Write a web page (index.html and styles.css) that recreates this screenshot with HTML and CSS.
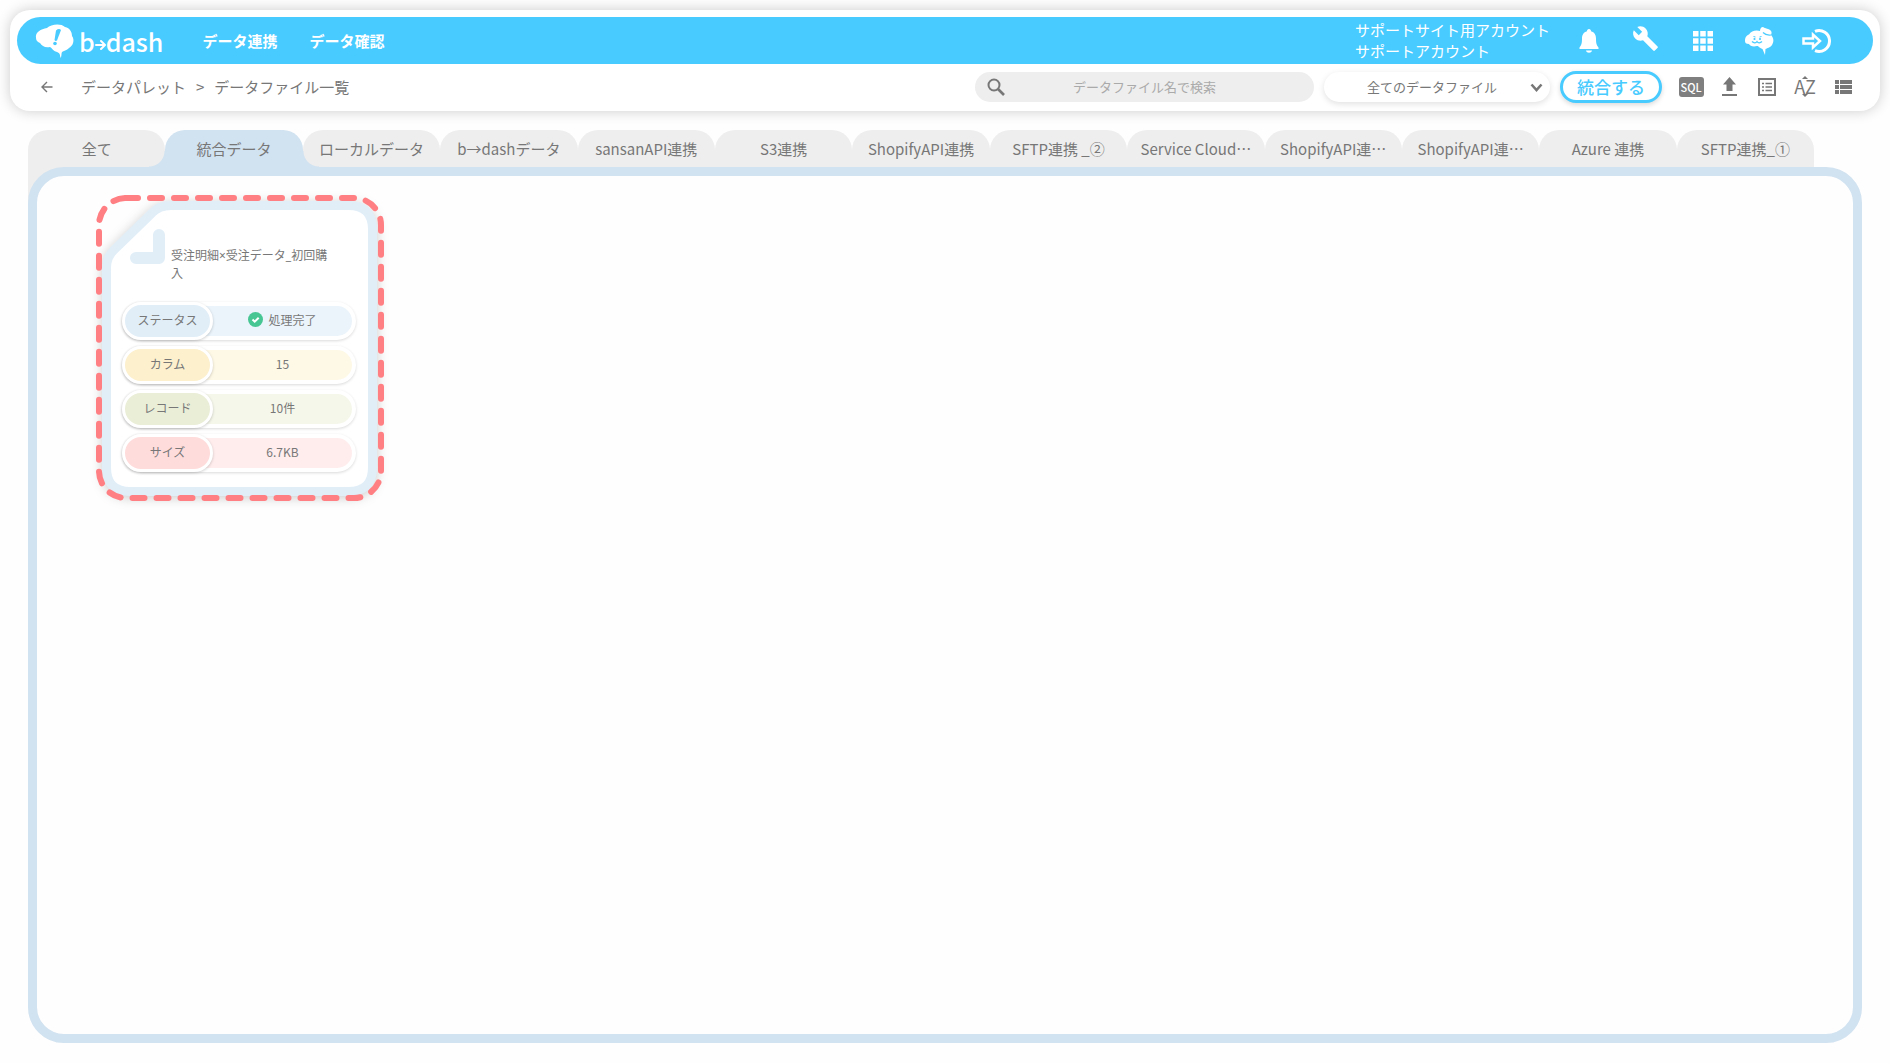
FILE: index.html
```html
<!doctype html>
<html lang="ja">
<head>
	<meta charset="utf-8">
	<title>データファイル一覧</title>
	<link rel="stylesheet" href="styles.css">
</head>
<body>
	<header class="header">
		<div class="bar">
			<a href="#" class="logo">
				<svg width="40" height="36" viewBox="0 0 40 36">
					<path fill="#fff" d="M1 15C0 9 6 6 12 5C16 1 26 0 30 4C35 5 37 9 37 13C40 17 38 23 34 25C31 28 28 28 27 29C26 31 27 33 25.500 35C25 32 25 30 22 29C18 28 17 25 15 24C10 25 7 23 5 20C3 19 1 18 1 15Z"/>
					<path fill="#48cbff" d="M21 7.500Q24 5 26 7L22 17.500Q20.500 18.500 19.500 17Z"/>
					<circle cx="20" cy="20.500" r="1.800" fill="#48cbff"/>
				</svg>
				<span class="logo-text">b<svg width="11" height="12" viewBox="0 0 11 12"><path d="M1 6H9M6 2L10 6L6 10" fill="none" stroke="#fff" stroke-width="2" stroke-linecap="round" stroke-linejoin="round"/></svg>dash</span>
			</a>
			<nav class="nav">
				<a href="#">データ連携</a>
				<a href="#">データ確認</a>
			</nav>
			<div class="account">
				<p>サポートサイト用アカウント</p>
				<p>サポートアカウント</p>
			</div>
			<div class="bar-icons">
				<button type="button" aria-label="通知">
					<svg width="20" height="24" viewBox="0 0 20 24" fill="#fff"><path d="M10 0C11.300 0 12 1 12 2.200C15.500 3 17 6 17 9.500C17 14 17.500 16 19.500 18.500V20H.5V18.500C2.500 16 3 14 3 9.500C3 6 4.500 3 8 2.200C8 1 8.700 0 10 0Z"/><path d="M7 21.500H13C12.500 24.500 7.500 24.500 7 21.500Z"/></svg>
				</button>
				<button type="button" class="raised" aria-label="設定">
					<svg width="27" height="27" viewBox="0 0 24 24" fill="#fff"><path d="M22.700 19l-9.100-9.100c.9-2.300.4-5-1.500-6.900-2-2-5-2.400-7.400-1.300L9 6 6 9 1.600 4.700C.4 7.100.9 10.100 2.900 12.100c1.900 1.900 4.600 2.400 6.900 1.500l9.100 9.100c.4.4 1 .4 1.400 0l2.300-2.300c.5-.4.5-1.100.1-1.400z"/></svg>
				</button>
				<button type="button" aria-label="アプリ一覧">
					<svg width="20" height="20" viewBox="0 0 20 20" fill="#fff"><path d="M0 0h5.500v5.500H0zM7.250 0h5.500v5.500h-5.500zM14.500 0H20v5.500h-5.500zM0 7.250h5.500v5.500H0zM7.250 7.250h5.500v5.500h-5.500zM14.500 7.250H20v5.500h-5.500zM0 14.500h5.500V20H0zM7.250 14.500h5.500V20h-5.500zM14.500 14.500H20V20h-5.500z"/></svg>
				</button>
				<button type="button" aria-label="ヘルプ">
					<svg width="29" height="28" viewBox="0 0 29 28"><path fill="#fff" d="M0 14C0 10 2 8 4 7.500C6 4 11 2.500 15 4C15 2 16 0 18 0C20 2 24 1 26 4C27 5 26.500 7 26 8C29 11 29 15 27 18C25 21 22 21 20.500 22L20 28L17.500 22C14 21 14 19 12 19C8 20 5 19 4 17C1 17 0 16 0 14Z"/><path d="M18 5.500C20 7.500 23 8.500 26 8M7 14.500C9 16.500 11 16 12 14.500C13 16 15 16.500 17 14.500" fill="none" stroke="#48cbff" stroke-width="1.200"/><path d="M8.500 9.500L10.500 10M16.500 9.500L14.500 10" stroke="#48cbff"/><circle cx="9.500" cy="12" r="1.100" fill="#48cbff"/><circle cx="15" cy="12" r="1.100" fill="#48cbff"/></svg>
				</button>
				<button type="button" aria-label="ログアウト">
					<svg width="29" height="26" viewBox="0 0 29 26" fill="none" stroke="#fff"><path stroke-width="2.500" d="M1.500 10.500H11V6.500L18 13L11 19.500V15.500H1.500Z"/><path stroke-width="3" d="M13 3.300A10.500 10.500 0 1 1 13 22.700"/></svg>
				</button>
			</div>
		</div>
		<div class="tools">
			<a href="#" class="back" aria-label="戻る">
				<svg width="12" height="12" viewBox="0 0 12 12"><path d="M11.500 6H1M6 1L1 6L6 11" fill="none" stroke="#777" stroke-width="1.400"/></svg>
			</a>
			<nav class="breadcrumb">
				<a href="#">データパレット</a>
				<span>&gt;</span>
				<span>データファイル一覧</span>
			</nav>
			<label class="search">
				<svg width="18" height="18" viewBox="0 0 18 18"><circle cx="7" cy="7" r="5.500" fill="none" stroke="#777" stroke-width="2"/><path d="M11 11L17 17" stroke="#777" stroke-width="2.600"/></svg>
				<input type="text" placeholder="データファイル名で検索" aria-label="データファイル名で検索">
			</label>
			<div class="filter">
				<select aria-label="データファイルの種類">
					<option>全てのデータファイル</option>
				</select>
				<svg width="13" height="9" viewBox="0 0 13 9"><path d="M1.500 1.500L6.500 7L11.500 1.500" fill="none" stroke="#777" stroke-width="2.600"/></svg>
			</div>
			<button type="button" class="merge">統合する</button>
			<div class="tool-icons">
				<button type="button" aria-label="SQL"><span class="sql">SQL</span></button>
				<button type="button" aria-label="アップロード">
					<svg width="17" height="20" viewBox="0 0 17 20" fill="#777"><path d="M8.500 0L15 7.500H11.500V14H5.500V7.500H2ZM1 17H16V19H1Z"/></svg>
				</button>
				<button type="button" aria-label="詳細表示">
					<svg width="18" height="18" viewBox="0 0 18 18" fill="none" stroke="#777"><path stroke-width="2" d="M1 1H17V17H1Z"/><path stroke-width="1.600" d="M4 5.500H6M7.500 5.500H14M4 9H6M7.500 9H14M4 12.500H6M7.500 12.500H14"/></svg>
				</button>
				<button type="button" aria-label="並び替え">
					<span class="sort">
						<svg width="6" height="3" viewBox="0 0 6 3" fill="#777"><path d="M0 3L3 0L6 3Z"/></svg>
						<span>AZ</span>
						<svg width="6" height="3" viewBox="0 0 6 3" fill="#777"><path d="M0 0L3 3L6 0Z"/></svg>
					</span>
				</button>
				<button type="button" aria-label="リスト表示">
					<svg width="17" height="14" viewBox="0 0 17 14" fill="#777"><path d="M0 0h4v4H0zM5 0h12v4H5zM0 5h4v4H0zM5 5h12v4H5zM0 10h4v4H0zM5 10h12v4H5z"/></svg>
				</button>
			</div>
		</div>
	</header>

	<main class="main">
		<nav class="tabs">
			<a href="#">全て</a>
			<a href="#" class="active">統合データ</a>
			<a href="#">ローカルデータ</a>
			<a href="#">b→dashデータ</a>
			<a href="#">sansanAPI連携</a>
			<a href="#">S3連携</a>
			<a href="#">ShopifyAPI連携</a>
			<a href="#">SFTP連携 _②</a>
			<a href="#">Service Cloud…</a>
			<a href="#">ShopifyAPI連…</a>
			<a href="#">ShopifyAPI連…</a>
			<a href="#">Azure 連携</a>
			<a href="#">SFTP連携_①</a>
		</nav>
		<div class="panel-wrap">
			<section class="panel">
				<article class="card">
					<svg class="card-frame" width="300" height="320" viewBox="0 0 300 320">
						<path class="frame" d="M16.500 277.500V78Q16.500 67 24 60L62 23Q69 15.500 81 15.500H258.500Q282.500 15.500 282.500 39.500V277.500Q282.500 301.500 258.500 301.500H40.500Q16.500 301.500 16.500 277.500Z"/>
						<path class="fold" d="M46 68H69V45"/>
						<rect class="dash" x="9" y="8" width="282" height="300" rx="27"/>
					</svg>
					<h2>受注明細×受注データ_初回購入</h2>
					<dl>
						<div class="row blue">
							<dt>ステータス</dt>
							<dd>
								<svg width="15" height="15" viewBox="0 0 15 15"><circle cx="7.500" cy="7.500" r="7.500" fill="#47c694"/><path d="M4.500 7.500L6.700 9.700L10.700 5.700" fill="none" stroke="#fff" stroke-width="2"/></svg>
								処理完了
							</dd>
						</div>
						<div class="row yellow">
							<dt>カラム</dt>
							<dd>15</dd>
						</div>
						<div class="row green">
							<dt>レコード</dt>
							<dd>10件</dd>
						</div>
						<div class="row red">
							<dt>サイズ</dt>
							<dd>6.7KB</dd>
						</div>
					</dl>
				</article>
			</section>
		</div>
	</main>
</body>
</html>
```

FILE: styles.css
```css
*{margin: 0;padding: 0;box-sizing: border-box;}
body{
	min-height: 100vh;display: flex;flex-direction: column;
	padding: 10px 10px 20px;
	background: #fefefe;color: #777;
	font-family: "Noto Sans CJK JP", "Noto Sans", sans-serif;
	font-size: 15px;
}
a{color: inherit;text-decoration: none;}
button{border: 0;background: none;font: inherit;color: inherit;cursor: pointer;}
svg{display: block;flex: none;}

/* header */
.header{
	background: #fff;border-radius: 20px;padding: 7px 7px 8px;
	box-shadow: 0 0 14px rgba(0,0,0,.2);
}
.bar{
	display: flex;align-items: center;height: 47px;
	padding: 0 42px 0 18px;
	background: #48cbff;border-radius: 24px;color: #fff;
}
.logo{display: flex;align-items: center;gap: 4px;}
.logo-text{
	display: flex;align-items: center;
	font-size: 25px;line-height: 34px;font-weight: 500;
}
.logo-text svg{margin-top: 8px;}
.nav{display: flex;gap: 32px;margin-left: 39px;font-weight: 700;}
.account{margin-left: auto;padding-bottom: 2px;line-height: 21px;}
.bar-icons{display: flex;gap: 28px;margin-left: 24px;}
.bar-icons button{width: 29px;height: 32px;display: flex;align-items: center;justify-content: center;}
.bar-icons .raised{align-items: flex-start;}

.tools{display: flex;align-items: center;height: 39px;padding: 6px 17px 0 24px;}
.back{margin-right: 28px;}
.breadcrumb{display: flex;gap: 10px;}
.search{
	display: flex;align-items: center;width: 339px;height: 30px;
	margin-left: auto;padding: 0 12px;
	background: #eee;border-radius: 15px;
}
.search input{
	flex: 1;min-width: 0;border: 0;background: none;outline: 0;
	font: inherit;font-size: 13px;text-align: center;padding-right: 18px;
}
.search input::placeholder{color: #aaa;}
.filter{position: relative;width: 226px;margin-left: 10px;}
.filter select{
	appearance: none;display: block;width: 100%;height: 30px;border: 0;border-radius: 15px;
	padding-right: 10px;background: #fff;box-shadow: 0 2px 6px rgba(0,0,0,.12);
	font: inherit;font-size: 13px;color: #777;text-align: center;text-align-last: center;
}
.filter svg{position: absolute;right: 7px;top: 11px;pointer-events: none;}
.merge{
	width: 102px;height: 32px;margin: 0 16px 0 10px;
	border: 3px solid #48cbff;border-radius: 16px;background: #fff;
	box-shadow: 0 2px 5px rgba(0,0,0,.15);
	color: #48cbff;font-size: 17px;font-weight: 500;line-height: 24px;
}
.tool-icons{display: flex;gap: 12px;}
.tool-icons button{width: 26px;height: 26px;display: flex;align-items: center;justify-content: center;}
.sql{
	width: 25px;height: 20px;border-radius: 3px;background: #7f7f7f;color: #fff;
	font-size: 11px;line-height: 20px;font-weight: 500;
}
.sort{display: flex;flex-direction: column;align-items: center;font-size: 18px;line-height: 15px;}

/* tabs */
.main{flex: 1;display: flex;flex-direction: column;padding: 19px 18px 0;}
.tabs{display: flex;margin-right: 48px;}
.tabs a{
	flex: 1 1 0;min-width: 0;height: 37px;line-height: 37px;
	background: #eee;border-radius: 20px 20px 0 0;
	text-align: center;font-size: 15px;white-space: nowrap;
}
.tabs .active{position: relative;background: #d1e2f0;}
.tabs .active:before,.tabs .active:after{content: '';position: absolute;bottom: 0;width: 16px;height: 16px;}
.tabs .active:before{right: 100%;background: radial-gradient(circle at 0 0, transparent 15px, #d1e2f0 16px);}
.tabs .active:after{left: 100%;background: radial-gradient(circle at 100% 0, transparent 15px, #d1e2f0 16px);}
.panel-wrap{flex: 1;display: flex;background: linear-gradient(#eee, #eee) no-repeat 0 0 / 38px 38px;}
.panel{
	flex: 1;padding: 25px 65px;
	border: 9px solid #d1e2f0;border-radius: 36px;background: #fefefe;
}

/* file card */
.card{position: relative;width: 276px;padding: 46px 22px 20px 20px;}
.card-frame{position: absolute;left: -12px;top: -11px;overflow: visible;}
.card-frame .frame{
	fill: #fff;stroke: #e1eef8;stroke-width: 9;
	filter: drop-shadow(0 2px 6px rgba(0,0,0,.2));
}
.card-frame .fold{fill: none;stroke: #e1eef8;stroke-width: 12;stroke-linecap: round;stroke-linejoin: round;}
.card-frame .dash{fill: none;stroke: #ff7f83;stroke-width: 6;stroke-linecap: round;stroke-dasharray: 12 12;}
.card h2{
	position: relative;height: 55px;margin: 0 18px 0 49px;
	font-family: "Noto Sans", "Noto Sans CJK JP", sans-serif;
	font-size: 12px;line-height: 18px;font-weight: 400;word-break: break-all;
}
.card dl{position: relative;display: grid;gap: 6px;font-size: 12px;}
.row{
	display: flex;height: 38px;border-radius: 19px;background: #fff;
	box-shadow: 0 1px 3px rgba(0,0,0,.15);
}
.row dt{
	position: relative;z-index: 1;width: 91px;border: 3px solid #fff;border-radius: 19px;
	text-align: center;line-height: 30px;box-shadow: 0 1px 3px rgba(0,0,0,.2);
}
.row dd{
	flex: 1;display: flex;align-items: center;justify-content: center;gap: 5px;
	margin: 4px 4px 4px -20px;padding: 0 0 3px 20px;border-radius: 0 15px 15px 0;
}
.blue dt{background: #e1eef8;}
.blue dd{background: #ebf4fb;}
.yellow dt{background: #fcf0cd;}
.yellow dd{background: #fef8e6;}
.green dt{background: #eaeed7;}
.green dd{background: #f6f7eb;}
.red dt{background: #ffdcdc;}
.red dd{background: #ffeded;}
```
